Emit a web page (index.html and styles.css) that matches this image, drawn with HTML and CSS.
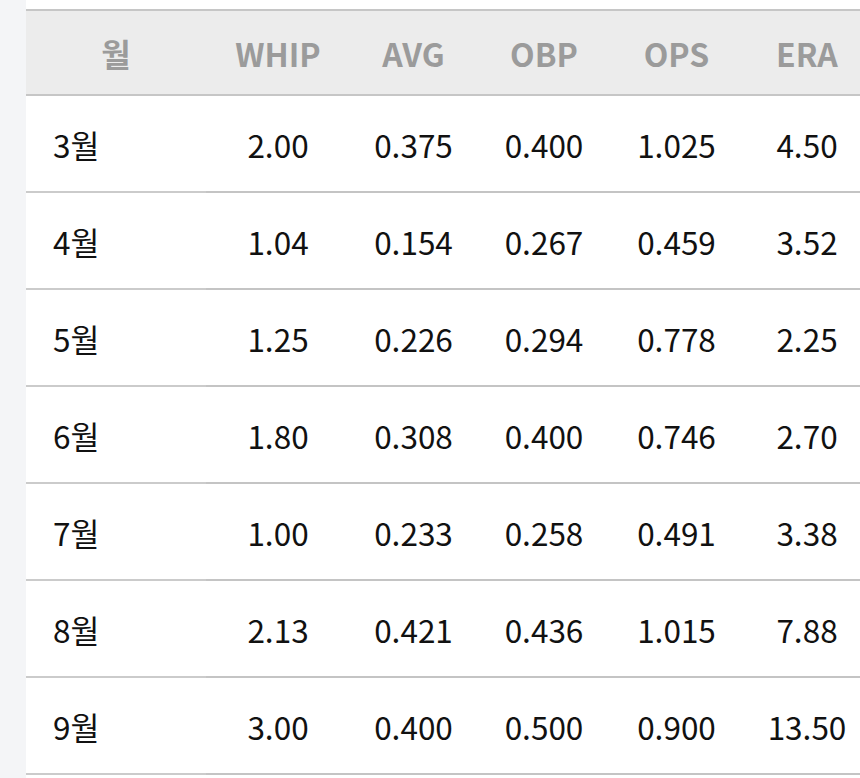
FILE: index.html
```html
<!DOCTYPE html>
<html lang="ko">
<head>
<meta charset="utf-8">
<link rel="stylesheet" href="styles.css">
</head>
<body>
<div class="panel">
  <table class="stats">
    <colgroup>
      <col class="c-month"><col class="c-whip"><col class="c-avg"><col class="c-obp"><col class="c-ops"><col class="c-era">
    </colgroup>
    <thead>
      <tr><th class="month">월</th><th>WHIP</th><th>AVG</th><th>OBP</th><th>OPS</th><th>ERA</th></tr>
    </thead>
    <tbody>
      <tr><td class="month">3월</td><td>2.00</td><td>0.375</td><td>0.400</td><td>1.025</td><td>4.50</td></tr>
      <tr><td class="month">4월</td><td>1.04</td><td>0.154</td><td>0.267</td><td>0.459</td><td>3.52</td></tr>
      <tr><td class="month">5월</td><td>1.25</td><td>0.226</td><td>0.294</td><td>0.778</td><td>2.25</td></tr>
      <tr><td class="month">6월</td><td>1.80</td><td>0.308</td><td>0.400</td><td>0.746</td><td>2.70</td></tr>
      <tr><td class="month">7월</td><td>1.00</td><td>0.233</td><td>0.258</td><td>0.491</td><td>3.38</td></tr>
      <tr><td class="month">8월</td><td>2.13</td><td>0.421</td><td>0.436</td><td>1.015</td><td>7.88</td></tr>
      <tr><td class="month">9월</td><td>3.00</td><td>0.400</td><td>0.500</td><td>0.900</td><td>13.50</td></tr>
    </tbody>
  </table>
</div>
</body>
</html>
```
FILE: styles.css
```css
html, body {
  margin: 0;
  padding: 0;
  background: #f4f5f7;
  overflow: hidden;
}
body {
  font-family: "Noto Sans CJK KR", "Noto Sans", sans-serif;
}
.panel {
  margin-left: 26px;
  width: 834px;
  height: 778px;
  background: #ffffff;
  padding-top: 9px;
  box-sizing: border-box;
  overflow: hidden;
}
.stats {
  table-layout: fixed;
  border-collapse: collapse;
  width: 846px;
}
.c-month { width: 180px; }
.c-whip { width: 144px; }
.c-avg { width: 127px; }
.c-obp { width: 134px; }
.c-ops { width: 131px; }
.c-era { width: 130px; }
.stats th {
  height: 83px;
  padding: 0;
  background: #ececec;
  color: #9b9b9b;
  font-size: 32px;
  font-weight: 700;
  text-align: center;
  border-top: 2px solid #c6c6c6;
  border-bottom: 2px solid #c6c6c6;
}
.stats td {
  height: 95px;
  padding: 0;
  color: #111111;
  font-size: 31.5px;
  font-weight: 400;
  text-align: center;
  border-bottom: 2px solid #c4c4c4;
}
.stats td.month {
  text-align: left;
  padding-left: 27px;
  border-bottom-color: #cbcbcb;
}
```
